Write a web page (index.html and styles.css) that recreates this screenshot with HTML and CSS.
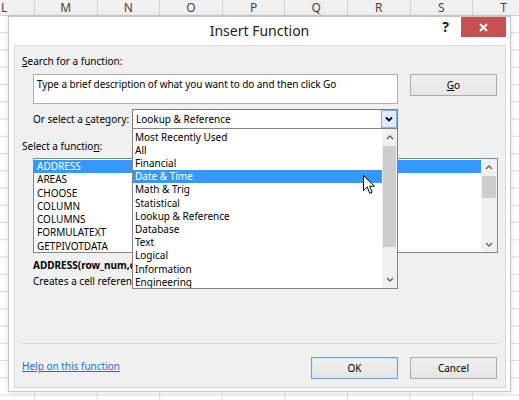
FILE: index.html
```html
<!DOCTYPE html>
<html>
<head>
<meta charset="utf-8">
<title>Insert Function</title>
<link rel="stylesheet" href="styles.css">
</head>
<body>
<div class="sheet">
  <div class="colheads">
    <div class="ch first">L</div><div class="ch">M</div><div class="ch">N</div><div class="ch">O</div><div class="ch">P</div><div class="ch">Q</div><div class="ch">R</div><div class="ch">S</div><div class="ch last">T</div>
  </div>
  <div class="cells"></div>
</div>

<div class="dialog">
  <div class="titlebar">
    <div></div>
    <div class="title">Insert Function</div>
    <div class="tb-right">
      <span class="help">?</span>
      <div class="close"><svg width="9" height="9" viewBox="0 0 9 9"><path d="M1 1L8 8M8 1L1 8" stroke="#fff" stroke-width="2" fill="none"/></svg></div>
    </div>
  </div>
  <div class="panel">
    <div class="label"><u>S</u>earch for a function:</div>
    <div class="search-row">
      <div class="search-box">Type a brief description of what you want to do and then click Go</div>
      <div class="btn go"><span><u>G</u>o</span></div>
    </div>
    <div class="cat-row">
      <div class="cat-label">Or select a <u>c</u>ategory:</div>
      <div class="select">
        <div class="select-value">Lookup &amp; Reference</div>
        <div class="select-btn"><svg width="8" height="6" viewBox="0 0 8 6"><path d="M1 1.5L4 4.5L7 1.5" stroke="#000" stroke-width="1.8" fill="none"/></svg></div>
        <div class="dropdown">
          <div class="dd-items">
            <div class="item">Most Recently Used</div>
            <div class="item">All</div>
            <div class="item">Financial</div>
            <div class="item sel">Date &amp; Time</div>
            <div class="item">Math &amp; Trig</div>
            <div class="item">Statistical</div>
            <div class="item">Lookup &amp; Reference</div>
            <div class="item">Database</div>
            <div class="item">Text</div>
            <div class="item">Logical</div>
            <div class="item">Information</div>
            <div class="item">Engineering</div>
          </div>
          <div class="vscroll dd-scroll">
            <div class="arrow"><svg width="8" height="5" viewBox="0 0 8 5"><path d="M1 4L4 1L7 4" stroke="#606060" stroke-width="1.3" fill="none"/></svg></div>
            <div class="thumb dd-thumb"></div>
            <div class="fill"></div>
            <div class="arrow"><svg width="8" height="5" viewBox="0 0 8 5"><path d="M1 1L4 4L7 1" stroke="#606060" stroke-width="1.3" fill="none"/></svg></div>
          </div>
        </div>
      </div>
    </div>
    <div class="label fn-label">Select a functio<u>n</u>:</div>
    <div class="listbox">
      <div class="lb-items">
        <div class="item sel">ADDRESS</div>
        <div class="item">AREAS</div>
        <div class="item">CHOOSE</div>
        <div class="item">COLUMN</div>
        <div class="item">COLUMNS</div>
        <div class="item">FORMULATEXT</div>
        <div class="item">GETPIVOTDATA</div>
      </div>
      <div class="vscroll lb-scroll">
        <div class="arrow"><svg width="8" height="5" viewBox="0 0 8 5"><path d="M1 4L4 1L7 4" stroke="#606060" stroke-width="1.3" fill="none"/></svg></div>
        <div class="thumb lb-thumb"></div>
        <div class="fill"></div>
        <div class="arrow"><svg width="8" height="5" viewBox="0 0 8 5"><path d="M1 1L4 4L7 1" stroke="#606060" stroke-width="1.3" fill="none"/></svg></div>
      </div>
    </div>
    <div class="syntax">ADDRESS(row_num,column_num,abs_num,a1,sheet_text)</div>
    <div class="desc">Creates a cell reference as text, given specified row and column numbers.</div>
    <div class="footer">
      <a class="help-link" href="#">Help on this function</a>
      <div class="btn ok">OK</div>
      <div class="btn cancel">Cancel</div>
    </div>
  </div>
</div>

<svg class="cursor" width="13" height="20" viewBox="0 0 13 20"><path d="M0.5 0.5L0.5 15.5L4.2 12L6.8 18.3L9.2 17.3L6.6 11.2L11.5 11.2Z" fill="#fff" stroke="#000" stroke-width="1" stroke-linejoin="round"/></svg>
</body>
</html>
```

FILE: styles.css
```css
html, body {
  margin: 0;
  padding: 0;
}
body {
  width: 519px;
  height: 400px;
  overflow: hidden;
  position: relative;
  background: #fff;
  font-family: "Noto Sans", "Open Sans", sans-serif;
  font-size: 10px;
  color: #000;
}

/* spreadsheet backdrop */
.sheet {
  width: 519px;
  height: 400px;
  overflow: hidden;
}
.colheads {
  display: flex;
  height: 16px;
  box-sizing: border-box;
  background: #f1f1f1;
  border-bottom: 1px solid #d0d0d0;
}
.ch {
  flex: 0 0 62.6px;
  box-sizing: border-box;
  border-right: 1px solid #d4d4d4;
  text-align: center;
  font-size: 12px;
  line-height: 15px;
  color: #444;
}
.ch.first {
  flex: 0 0 35px;
  text-align: left;
  padding-left: 1px;
}
.ch.last {
  flex: 1 1 auto;
  border-right: 0;
  text-align: left;
  padding-left: 27px;
}
.cells {
  height: 384px;
  background-image:
    linear-gradient(to right, #dadada 1px, transparent 1px),
    linear-gradient(to bottom, transparent 16.25px, #dadada 16.25px);
  background-size: 62.6px 100%, 100% 17.25px;
  background-position: 34px 0, 0 0;
}

/* dialog */
.dialog {
  position: absolute;
  left: 8px;
  top: 16px;
  width: 503px;
  height: 376px;
  box-sizing: border-box;
  background: #fff;
  border: 1px solid #c6c6c6;
  box-shadow: 0 0 5px rgba(0, 0, 0, 0.12);
  display: flex;
  flex-direction: column;
}
.titlebar {
  height: 28px;
  flex: 0 0 28px;
  display: grid;
  grid-template-columns: 1fr auto 1fr;
}
.title {
  font-size: 14px;
  line-height: 28px;
  color: #222;
}
.tb-right {
  display: flex;
  justify-content: flex-end;
  align-items: flex-start;
  padding-right: 4px;
}
.help {
  font-weight: bold;
  font-size: 14px;
  line-height: 20px;
  margin-right: 12px;
  color: #222;
}
.close {
  width: 45px;
  height: 20px;
  background: #c75050;
  display: flex;
  align-items: center;
  justify-content: center;
}

.panel {
  flex: 1;
  margin: 0 4px 3px 5px;
  background: #f0f0f0;
  border: 1px solid #dadada;
  padding: 8px 7px 0 7px;
  display: flex;
  flex-direction: column;
}
.label {
  line-height: 14px;
}
.search-row {
  display: flex;
  align-items: flex-start;
  gap: 12px;
  margin: 6px 0 0 11px;
}
.search-box {
  width: 365px;
  height: 30px;
  box-sizing: border-box;
  border: 1px solid #abadb3;
  background: #fff;
  padding: 2px 3px;
  line-height: 14px;
  letter-spacing: -0.08px;
}
.btn {
  box-sizing: border-box;
  width: 87px;
  height: 22px;
  border: 1px solid #acacac;
  background: linear-gradient(#f0f0f0, #e5e5e5);
  display: flex;
  align-items: center;
  justify-content: center;
}

.cat-row {
  display: flex;
  align-items: center;
  height: 20px;
  margin: 5px 0 0 11px;
}
.cat-label {
  width: 99px;
}
.select {
  position: relative;
  width: 266px;
  height: 20px;
  box-sizing: border-box;
  border: 1px solid #7a7a7a;
  background: #fff;
  display: flex;
}
.select-value {
  flex: 1;
  padding-left: 3px;
  line-height: 18px;
}
.select-btn {
  width: 16px;
  height: 18px;
  box-sizing: border-box;
  border: 1px solid #7eb4ea;
  background: #dcecfc;
  display: flex;
  align-items: center;
  justify-content: center;
}
.dropdown {
  position: absolute;
  top: 100%;
  left: -1px;
  width: 266px;
  height: 161px;
  box-sizing: border-box;
  border: 1px solid #828282;
  background: #fff;
  display: flex;
  z-index: 5;
  overflow: hidden;
}
.dd-items {
  flex: 1;
  padding-top: 1.5px;
}
.dd-items .item {
  height: 13.22px;
  line-height: 13.22px;
  padding-left: 2px;
  white-space: nowrap;
}
.item.sel {
  background: #3399ff;
  color: #fff;
}

.vscroll {
  background: #f0f0f0;
  display: flex;
  flex-direction: column;
}
.dd-scroll {
  width: 15px;
}
.lb-scroll {
  width: 16px;
}
.arrow {
  height: 17px;
  flex: 0 0 17px;
  display: flex;
  align-items: center;
  justify-content: center;
}
.lb-scroll .arrow {
  height: 16px;
  flex-basis: 16px;
}
.thumb {
  background: #cdcdcd;
  margin: 0 1px;
}
.dd-thumb {
  height: 101px;
}
.lb-thumb {
  height: 22px;
  margin-top: 1px;
}
.fill {
  flex: 1;
}

.fn-label {
  margin-top: 10px;
}
.listbox {
  width: 465px;
  height: 95px;
  box-sizing: border-box;
  margin: 5px 0 0 11px;
  border: 1px solid #828790;
  background: #fff;
  display: flex;
}
.lb-items {
  flex: 1;
  padding-top: 1px;
}
.lb-items .item {
  height: 13.3px;
  line-height: 13.3px;
  padding-left: 3px;
}
/* the open category list covers the right part of these two lines */
.syntax,
.desc {
  width: 99px;
  overflow: hidden;
  white-space: nowrap;
  line-height: 14px;
}
.syntax {
  margin: 5px 0 0 11px;
  font-weight: bold;
}
.desc {
  margin: 2px 0 0 11px;
}
.footer {
  margin-top: 55px;
  border-top: 1px solid #d8d8d8;
  padding-top: 13px;
  display: flex;
  align-items: flex-start;
  gap: 12px;
}
.help-link {
  margin-top: 2px;
  line-height: 14px;
  color: #1a6fd0;
  text-decoration: underline;
  margin-right: auto;
}
.ok {
  border-color: #5fa3e6;
  box-shadow: inset 0 0 0 1px #d4e7fa;
}
.cancel {
  margin-right: 1px;
}

.cursor {
  position: absolute;
  left: 363px;
  top: 175px;
  z-index: 10;
}
```
